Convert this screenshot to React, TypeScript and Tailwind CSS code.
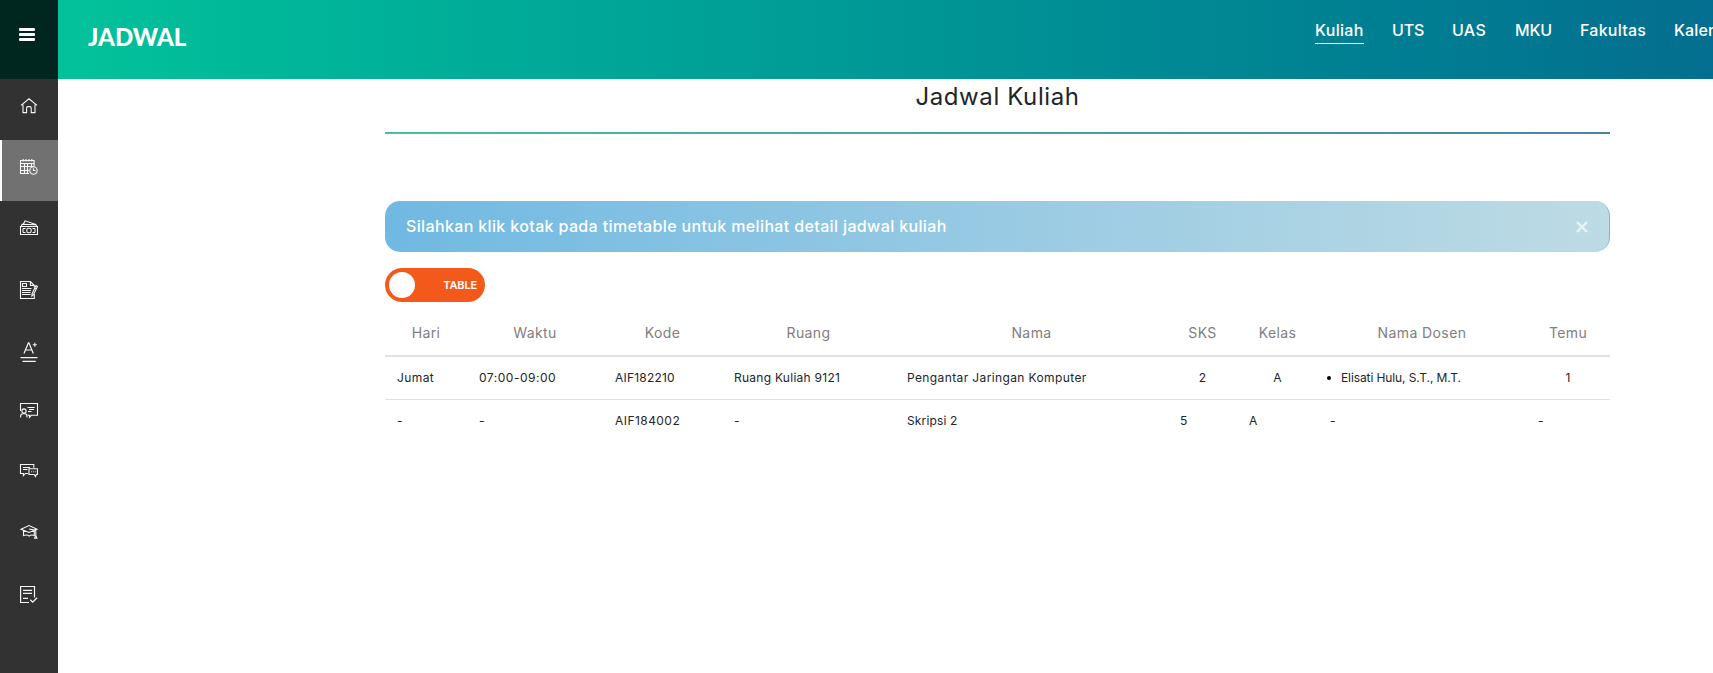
import React from "react";

const Icon = ({ children }: { children: React.ReactNode }) => (
  <svg width="18" height="18" viewBox="0 0 18 18" fill="none" stroke="#f7f7f7" strokeWidth="1.1" className="block overflow-visible">
    {children}
  </svg>
);

const HomeIcon = () => (
  <Icon>
    <path d="M1 7.4 9 .8l8 6.6M3 6.6v8h3.6V10c0-.9.7-1.4 1.4-1.4h1.8c.8 0 1.4.5 1.4 1.4v4.6H15v-8" />
  </Icon>
);

const CalendarIcon = () => (
  <Icon>
    <path d="M9 14.5H.5v-13h13.6v6M.5 4.5h13.6M.5 7.5h13.1M.5 11.5H9M4.5 4.5v10M7.5 4.5v10M11.5 4.5v4M3.2 0v2.5M6 0v2.5M9 0v2.5M11.8 0v2.5" />
    <circle cx="13.5" cy="11.5" r="3.7" />
    <path d="M13.5 9.3v2.2h2" />
  </Icon>
);

const MoneyIcon = () => (
  <Icon>
    <path d="M.5 6.5h17v8H.5zM1.5 6 2 4.2l14 .6.7 1.7M3.5 4 5 .8l11 3.6" />
    <path d="M3 8.5v4M15 8.5v4M3 8.5h2.5M3 12.5h2.5M12.5 8.5H15M12.5 12.5H15" strokeWidth="1" />
    <rect x="6.8" y="8.3" width="4.4" height="4.4" rx="1.8" />
  </Icon>
);

const DocumentIcon = () => (
  <Icon>
    <path d="M14.3 13v4.5H.5V.5h9.9l3.9 4v2M10.4.5v4h3.9M2.5 2.5h4v3h-4zM2 7.5h9.5M2 9.5h9M2 11.5h8.5M2 13.5h8.5" />
    <path d="m16 4.6 1.4.8-3.9 8.3-1.6 1.4.1-2.2zM14.6 7l1.6.8" />
  </Icon>
);

const GradeIcon = () => (
  <Icon>
    <path d="M4 11.5 8.4.8h.5l4.4 10.7M5.5 8h6.3" strokeWidth="1.2" />
    <path d="M14.8.7v4M12.8 2.7h4" />
    <path d="M.5 15.6h17M2.5 19.4h13.2" strokeWidth="1.4" />
  </Icon>
);

const BoardIcon = () => (
  <Icon>
    <path d="M.5 8V.5h17v11.8h-6.3l-1.7 2v-2H7.6M7.5 4.5h7.2M9 6.5h5M8 8.5h3.5" />
    <circle cx="4" cy="8" r="2.1" />
    <path d="M.6 14.6v-1.2c0-1.7 1-2.7 2.3-2.7h2c1.3 0 2.1 1 2.1 2.7v1.2" />
  </Icon>
);

const ChatIcon = () => (
  <Icon>
    <path d="M8.2 9.5H5.4l-2 2.2V9.5H.5v-9h13.3v3.3M3 3.5h7M3 5.5h4.5" />
    <path d="M9 4.8h8.4v5.7h-1.1l-.8 2-1.4-2H9zM11 7.7h.8M12.9 7.7h.8M14.8 7.7h.8" />
  </Icon>
);

const GraduationIcon = () => (
  <Icon>
    <path d="m1 4.2 8-3.6 8 3.6-8 3.3zM3.5 5.4v5.2c2.7-1 4.2-.8 5.7.5 1.5-1.3 3-1.5 5.1-.5V5.4M9 4l6.8 1.2v5.2M15.8 10.4l-1.2 2.7h2.3z" />
  </Icon>
);

const TaskIcon = () => (
  <Icon>
    <path d="M9 16.5H.6v-16h13.9v11M3 4.3h9M3 7.3h9M3 12.4h5" strokeWidth="1.2" />
    <path d="m10.3 13.8 2.4 2.4 4.4-4.4" strokeWidth="1.3" />
  </Icon>
);

const menu = [HomeIcon, CalendarIcon, MoneyIcon, DocumentIcon, GradeIcon, BoardIcon, ChatIcon, GraduationIcon, TaskIcon];

export default function App() {
  return (
    <div className="flex h-[673px] w-full overflow-hidden bg-white font-['Inter',sans-serif] text-[#212529]">
      <aside className="flex w-[58px] shrink-0 flex-col bg-[#323232]">
        <button className="flex h-[79px] shrink-0 flex-col items-start gap-[2px] bg-[#00271f] pt-[27.5px] pl-[19px]">
          <span className="h-[3px] w-4 rounded-[1px] bg-white" />
          <span className="h-[3px] w-4 rounded-[1px] bg-white" />
          <span className="h-[3px] w-4 rounded-[1px] bg-white" />
        </button>
        {menu.map((Item, i) => (
          <a
            key={i}
            className={
              i === 1
                ? "flex h-[61px] shrink-0 border-l-2 border-white bg-[#717171] pt-[19px] pl-[18px]"
                : "flex h-[61px] shrink-0 pt-[19px] pl-5"
            }
          >
            <Item />
          </a>
        ))}
      </aside>

      <div className="flex min-w-0 flex-1 flex-col">
        <header className="flex h-[79px] shrink-0 items-start justify-between overflow-hidden bg-linear-to-r from-[#03c29a] to-[#046e8f] pl-[30px]">
          <h1 className="pt-[21px] font-['Lato',sans-serif] text-2xl leading-8 font-black text-white">JADWAL</h1>
          <nav className="flex w-[398px] shrink-0 gap-7 pt-[18px] text-base leading-6 font-medium whitespace-nowrap text-white">
            <a className="w-[49px] shrink-0 border-b border-white pb-px tracking-[0.3px]">Kuliah</a>
            <a className="w-8 shrink-0 tracking-[-0.1px]">UTS</a>
            <a className="w-[35px] shrink-0 tracking-[0.3px]">UAS</a>
            <a className="w-[37px] shrink-0 tracking-[-0.2px]">MKU</a>
            <a className="w-[66px] shrink-0 tracking-[0.25px]">Fakultas</a>
            <a className="shrink-0 tracking-[0.1px]">Kalender</a>
          </nav>
        </header>

        <main className="ml-[327px] flex w-[1225px] flex-col">
          <h2 className="flex h-[53px] items-start justify-center pt-0.5 text-2xl leading-8 tracking-[0.6px]">Jadwal Kuliah</h2>
          <div className="h-0.5 bg-linear-to-r from-[#45c0a2] to-[#4685a2]" />

          <div className="mt-[67px] flex h-[51px] items-center justify-between rounded-[15px] border-r border-[#7db8d4] bg-linear-to-r from-[#70b9e2] via-[#98cae3] to-[#bddbe4] px-[21px] text-base font-medium text-white">
            <span className="pb-0.5 tracking-[0.36px]">Silahkan klik kotak pada timetable untuk melihat detail jadwal kuliah</span>
            <svg width="12" height="12" viewBox="0 0 12 12" stroke="#e9f4f8" strokeWidth="2.4">
              <path d="m1 1 10 10M11 1 1 11" />
            </svg>
          </div>

          <div className="mt-4 flex h-[34px] w-[100px] items-center justify-between rounded-full bg-[#f3591b] pr-2 pl-1">
            <span className="h-[26px] w-[26px] rounded-full bg-white" />
            <span className="text-[11px] font-semibold tracking-[-0.15px] text-white">TABLE</span>
          </div>

          <table className="mt-[9px] w-[1225px] table-fixed border-separate border-spacing-0 text-xs whitespace-nowrap">
            <colgroup>
              <col className="w-[82px]" />
              <col className="w-[136px]" />
              <col className="w-[119px]" />
              <col className="w-[173px]" />
              <col className="w-[273px]" />
              <col className="w-[69px]" />
              <col className="w-[81px]" />
              <col className="w-[208px]" />
              <col className="w-[84px]" />
            </colgroup>
            <thead>
              <tr className="h-[46px] text-sm tracking-[0.4px] text-[#808080] [&>th]:border-b-2 [&>th]:border-[#dee2e6] [&>th]:p-0 [&>th]:font-normal">
                <th>Hari</th>
                <th>Waktu</th>
                <th>Kode</th>
                <th>Ruang</th>
                <th>Nama</th>
                <th>SKS</th>
                <th>Kelas</th>
                <th>Nama Dosen</th>
                <th>Temu</th>
              </tr>
            </thead>
            <tbody>
              <tr className="h-[43px] [&>td]:border-b [&>td]:border-[#dee2e6] [&>td]:py-0 [&>td]:pr-0 [&>td]:pl-3">
                <td className="tracking-[0.4px]">Jumat</td>
                <td className="tracking-[0.52px]">07:00-09:00</td>
                <td className="tracking-[0.2px]">AIF182210</td>
                <td className="tracking-[0.26px]">Ruang Kuliah 9121</td>
                <td className="tracking-[0.38px]">Pengantar Jaringan Komputer</td>
                <td className="pr-3! text-center">2</td>
                <td className="pr-3! text-center">A</td>
                <td className="pl-[9px]!">
                  <span className="flex items-center gap-[10px] tracking-[-0.1px]">
                    <i className="h-1 w-1 rounded-full bg-black" />
                    Elisati Hulu, S.T., M.T.
                  </span>
                </td>
                <td className="pr-3! text-center">1</td>
              </tr>
              <tr className="h-[42px] [&>td]:py-0 [&>td]:pr-0 [&>td]:pl-3">
                <td>-</td>
                <td>-</td>
                <td className="tracking-[0.45px]">AIF184002</td>
                <td>-</td>
                <td className="tracking-[0.15px]">Skripsi 2</td>
                <td>5</td>
                <td>A</td>
                <td>-</td>
                <td>-</td>
              </tr>
            </tbody>
          </table>
        </main>
      </div>
    </div>
  );
}
